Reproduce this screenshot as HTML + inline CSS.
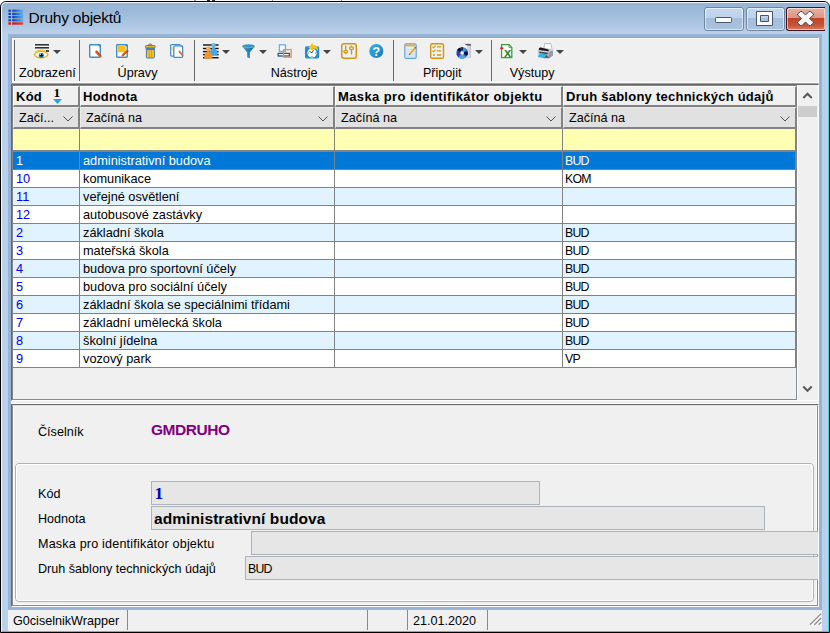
<!DOCTYPE html>
<html lang="cs">
<head>
<meta charset="utf-8">
<title>Druhy objektů</title>
<style>
html,body{margin:0;padding:0;background:#fff;}
body{width:830px;height:633px;position:relative;overflow:hidden;font-family:"Liberation Sans",sans-serif;font-size:12.6px;color:#000;}
.abs{position:absolute;}
#win{position:absolute;left:0;top:1px;width:830px;height:632px;box-sizing:border-box;border:1px solid #000;border-radius:6px 6px 0 0;background:#b9d1ea;overflow:hidden;}
#hl{position:absolute;left:0;top:0;right:0;bottom:0;border:1px solid #f4f9ff;border-right-color:#3fd8f0;border-bottom-color:#28d0ee;border-radius:5px 5px 0 0;}
#cap{position:absolute;left:1px;top:1px;width:826px;height:31px;background:linear-gradient(#98b4d5 0,#9ebadA 30%,#abc5e2 65%,#b7cfe9 92%,#b9d1ea 100%);border-radius:4px 4px 0 0;}
#title{position:absolute;left:27.5px;top:6px;font-size:15.5px;letter-spacing:-0.22px;line-height:20px;color:#000;white-space:nowrap;}
#inner{position:absolute;left:7px;top:32px;width:814px;height:576px;background:#98b3d3;}
#client{position:absolute;left:10px;top:35px;width:808px;height:570px;background:#f0f0f0;}
.cb{position:absolute;top:5px;height:24px;box-sizing:border-box;border:1px solid #5c6f88;border-radius:3px;}
.cb i{position:absolute;left:0;top:0;right:0;bottom:0;border:1px solid rgba(255,255,255,.55);border-radius:2px;}
#bmin,#bmax{background:linear-gradient(#c3d7ee 0,#bdd3ec 46%,#a3bddb 47%,#a9c3e0 100%);border-color:#6f86a3;}
#bclose{background:linear-gradient(#e8b0a0 0,#dc9482 46%,#c0432a 47%,#c8553a 80%,#d9826a 100%);border-color:#431422;}
/* toolbar */
#tb{position:absolute;left:0;top:0;width:808px;height:47px;background:#f0f0f0;border-top:1px solid #a0a0a0;border-left:1px solid #a0a0a0;border-right:1px solid #fff;border-bottom:1px solid #a0a0a0;box-sizing:border-box;}
#tb:before{content:'';position:absolute;left:0;top:0;right:0;bottom:0;border:1px solid #fff;border-right:0;}
.sep{position:absolute;top:4px;width:1px;height:40px;background:#686868;}
.sep2{position:absolute;top:2px;width:1px;height:41px;background:#686868;}
.tl{position:absolute;top:27px;line-height:16px;white-space:nowrap;}
.ar{position:absolute;width:0;height:0;border-left:4px solid transparent;border-right:4px solid transparent;border-top:4px solid #444;}
/* grid */
#grid{position:absolute;left:0;top:47px;width:808px;height:317px;background:#f0f0f0;border-top:1px solid #696969;border-left:1px solid #696969;border-bottom:1px solid #fff;border-right:1px solid #fff;box-sizing:border-box;}
#gin{position:absolute;left:0;top:0;width:785px;height:315px;box-sizing:border-box;border-top:1px solid #828282;border-left:1px solid #828282;border-right:1px solid #858a94;border-bottom:1px solid #858a94;}
#gin2{position:absolute;left:0;top:0;width:784px;height:313px;}
.hc{position:absolute;top:0;height:21px;box-sizing:border-box;background:#f0f0f0;border-top:1px solid #fff;border-left:1px solid #fff;border-right:2px solid #828282;border-bottom:2px solid #828282;font-weight:bold;font-size:13px;letter-spacing:0.25px;line-height:20px;padding-left:2px;white-space:nowrap;overflow:hidden;}
.fc{position:absolute;top:21px;height:22px;box-sizing:border-box;background:#e1e1e1;border-top:1px solid #ececec;border-left:1px solid #ececec;border-right:2px solid #828282;border-bottom:2px solid #828282;line-height:21px;padding-left:5px;white-space:nowrap;overflow:hidden;}
.row{position:absolute;left:0;width:784px;height:18px;box-sizing:border-box;border-bottom:1px solid #828282;background:#fff;line-height:19px;white-space:nowrap;}
.row.alt{background:#e1f3ff;}
.row.sel{background:#0078d7;color:#fff;}
.row.sel .c0{color:#fff;}
.row span{font-size:12.75px;line-height:18px;position:absolute;top:0;height:17px;box-sizing:border-box;border-right:1px solid #828282;padding-left:3px;overflow:hidden;}
.c0{left:0;width:67px;color:#0000f0;}
.c1{left:67px;width:255px;}
.c2{left:322px;width:228px;}
.c3{left:550px;width:234px;border-right-width:2px !important;font-size:12.3px !important;letter-spacing:-0.75px;padding-left:2px !important;}
/* form */
#spl{position:absolute;left:0;top:366px;width:808px;height:1px;background:#fff;}
#form{position:absolute;left:0;top:367px;width:808px;height:203px;overflow:hidden;background:#f0f0f0;border-top:1px solid #696969;border-left:1px solid #696969;border-bottom:1px solid #fff;border-right:1px solid #fff;box-sizing:border-box;}
#fin{position:absolute;left:0;top:0;width:806px;height:201px;box-sizing:border-box;border-left:1px solid #8c8c8c;border-top:1px solid #e3e3e3;border-right:1px solid #858a94;border-bottom:1px solid #858a94;}
#fin:before{content:'';position:absolute;left:0;top:0;right:0;bottom:0;border:1px solid #fff;border-top:0;}
.lb{position:absolute;line-height:16px;white-space:nowrap;}
.fd{position:absolute;height:24px;box-sizing:border-box;background:#e6e6e6;border:1px solid #adb1b8;line-height:22px;padding-left:2px;white-space:nowrap;}
/* status */
#status{position:absolute;left:7px;top:608px;width:814px;height:21px;background:#f0f0f0;}
.ss{position:absolute;top:0;width:1px;height:20px;background:#8a8a8a;}

.chev{position:absolute;right:5px;top:8px;}
#yrow{position:absolute;left:0;top:43px;width:784px;height:23px;box-sizing:border-box;border-bottom:2px solid #828282;background:#ffffb4;}
#yrow span{position:absolute;top:0;height:21px;box-sizing:border-box;border-right:1px solid #828282;}
#vsb{position:absolute;left:785px;top:1px;width:20px;height:314px;background:#f0f0f0;border-left:1px solid #fff;}
#gb{position:absolute;left:3px;top:58px;width:799px;height:139px;box-sizing:border-box;border:1px solid #9db5d3;border-radius:4px;}
#gb i{position:absolute;left:0;top:0;right:0;bottom:0;border:1px solid #fff;border-radius:3px;}
.srt{position:absolute;left:39.5px;top:-4px;font-size:13.5px;letter-spacing:0;font-family:'Liberation Serif',serif;}
</style>
</head>
<body>
<div class="abs" style="left:194px;top:0;width:2px;height:1px;background:#9a9a9a"></div><div class="abs" style="left:207px;top:0;width:3px;height:1px;background:#222"></div><div class="abs" style="left:212px;top:0;width:3px;height:1px;background:#333"></div><div class="abs" style="left:272px;top:0;width:1px;height:1px;background:#888"></div><div class="abs" style="left:341px;top:0;width:1px;height:1px;background:#888"></div>
<div id="win">
  <div id="cap"></div>
  <div id="hl"></div>
  <svg class="abs" style="left:7px;top:7.1px" width="16" height="16" viewBox="0 0 16 16">
    <defs>
      <linearGradient id="tb1" x1="0" y1="0" x2="1" y2="0"><stop offset="0" stop-color="#0a3cb4"/><stop offset="0.6" stop-color="#2f86ea"/><stop offset="1" stop-color="#5cb0f6"/></linearGradient>
      <linearGradient id="tb2" x1="0" y1="0" x2="1" y2="0"><stop offset="0" stop-color="#c81408"/><stop offset="1" stop-color="#e8483a"/></linearGradient>
    </defs>
    <g>
      <rect x="0.4" y="0.6" width="2.6" height="2.2" fill="#1746b8"/><rect x="4.2" y="0.6" width="11" height="2.2" fill="url(#tb1)"/>
      <rect x="0.4" y="3.8" width="2.6" height="2.2" fill="#1746b8"/><rect x="4.2" y="3.8" width="11" height="2.2" fill="url(#tb1)"/>
      <rect x="0.4" y="7" width="2.6" height="2.2" fill="#1746b8"/><rect x="4.2" y="7" width="11" height="2.2" fill="url(#tb1)"/>
      <rect x="0.4" y="10.2" width="2.6" height="2.2" fill="#1746b8"/><rect x="4.2" y="10.2" width="11" height="2.2" fill="url(#tb1)"/>
      <rect x="0.4" y="13.3" width="2.6" height="2.4" fill="#e01808"/><rect x="4.2" y="13.3" width="11" height="2.4" fill="url(#tb2)"/>
      <g fill="#7d8ca8" opacity="0.8"><rect x="4.2" y="2.8" width="11" height="0.7"/><rect x="4.2" y="6" width="11" height="0.7"/><rect x="4.2" y="9.2" width="11" height="0.7"/><rect x="4.2" y="12.4" width="11" height="0.7"/></g>
    </g>
  </svg>
  <div id="title">Druhy objektů</div>
  <div class="cb" id="bmin" style="left:703px;width:40px"><i></i><svg class="abs" style="left:9px;top:8px" width="20" height="9" viewBox="0 0 20 9"><rect x="1.5" y="1.5" width="16" height="5" rx="0.8" fill="#fcfcfd" stroke="#4b566b" stroke-width="1"/></svg></div>
  <div class="cb" id="bmax" style="left:745px;width:39px"><i></i><svg class="abs" style="left:8px;top:2px" width="20" height="18" viewBox="0 0 20 18"><path fill-rule="evenodd" d="M1.5 1.5 H17.5 V15.5 H1.5 Z M5.5 5.5 V11.5 H13.5 V5.5 Z" fill="#fafafb" stroke="#4b566b" stroke-width="1" stroke-linejoin="round"/></svg></div>
  <div class="cb" id="bclose" style="left:785px;width:39px;border-right:0;border-radius:3px 0 0 3px"><i></i><svg class="abs" style="left:9px;top:2px" width="20" height="18" viewBox="0 0 20 18"><path d="M1.5 4 L4.5 1.5 H6 L9.5 5 L13 1.5 H14.5 L17.5 4 V5 L13.5 8.5 L17.5 12 V13 L14.5 15.5 H13 L9.5 12 L6 15.5 H4.5 L1.5 13 V12 L5.5 8.5 L1.5 5 Z" fill="#f6f6f6" stroke="#3d4660" stroke-width="1" stroke-linejoin="round"/></svg></div>
  <div id="inner"></div>
  <div id="client">
    <div id="tb">
      <div class="sep" style="left:2px;top:2px;height:41px"></div>
      <div class="sep2" style="left:67px"></div>
      <div class="sep2" style="left:182px"></div>
      <div class="sep2" style="left:381px"></div>
      <div class="sep2" style="left:479px"></div>
      <div class="tl" style="left:-64.7px;width:200px;text-align:center">Zobrazení</div>
      <div class="tl" style="left:25.5px;width:200px;text-align:center">Úpravy</div>
      <div class="tl" style="left:182.2px;width:200px;text-align:center">Nástroje</div>
      <div class="tl" style="left:330.2px;width:200px;text-align:center">Připojit</div>
      <div class="tl" style="left:420.1px;width:200px;text-align:center">Výstupy</div>
      <div class="ar" style="left:41px;top:12px"></div>
      <div class="ar" style="left:210px;top:12px"></div>
      <div class="ar" style="left:247px;top:12px"></div>
      <div class="ar" style="left:311px;top:12px"></div>
      <div class="ar" style="left:463px;top:12px"></div>
      <div class="ar" style="left:507px;top:12px"></div>
      <div class="ar" style="left:544px;top:12px"></div>
      <svg class="abs" style="left:-1px;top:-1px" width="808" height="47" viewBox="11 37 808 47">
        <defs>
          <linearGradient id="gHelp" x1="0" y1="0" x2="1" y2="1"><stop offset="0" stop-color="#35b4e8"/><stop offset="1" stop-color="#1478bd"/></linearGradient>
          <linearGradient id="gFun" x1="0" y1="0" x2="1" y2="0"><stop offset="0" stop-color="#3aa0dc"/><stop offset="1" stop-color="#155f9e"/></linearGradient>
          <radialGradient id="gDisc" cx="0.5" cy="0.5" r="0.5"><stop offset="0" stop-color="#8ec8f0"/><stop offset="0.55" stop-color="#1a58c0"/><stop offset="1" stop-color="#0a1440"/></radialGradient>
        </defs>
        <!-- eye / view -->
        <g>
          <rect x="35" y="44.1" width="14" height="1.4" fill="#1c1c1c"/>
          <rect x="35" y="47.1" width="14" height="1.4" fill="#1c1c1c"/>
          <rect x="46" y="50.2" width="3" height="1.6" fill="#222"/>
          <path d="M34.3 54.6 C36.5 50.6 45.5 50.2 48 54.6 C45.5 58.8 36.8 59 34.3 54.6 Z" fill="#fff" stroke="#e2b21c" stroke-width="1.2"/>
          <path d="M35 52.2 C38 49.6 43.5 49.6 46 51.4" fill="none" stroke="#e8bc28" stroke-width="1"/>
          <circle cx="41.3" cy="55.3" r="2.6" fill="#2384b4"/>
          <circle cx="41.3" cy="55.3" r="1.4" fill="#0a0a14"/>
          <circle cx="40.5" cy="54.2" r="0.6" fill="#fff"/>
        </g>
        <!-- new -->
        <g>
          <rect x="89.7" y="44.7" width="10.6" height="12.6" rx="0.7" fill="#fff" stroke="#3d8fcf" stroke-width="1.4"/>
          <path d="M97.6 44.7 L100.3 47.4 L100.3 44.7 Z" fill="#3d8fcf"/>
          <path d="M95 51.2 L96.8 50.4 L101.6 56 L100 57.8 L95.2 52.6 Z" fill="#e2601c"/><path d="M96.8 50.4 L101.6 56 L101 56.7 L96.2 51 Z" fill="#b8420c"/>
          <path d="M94.6 50.2 L96.4 50.8 L95.4 52 Z" fill="#e8c890"/>
        </g>
        <!-- edit -->
        <g>
          <rect x="116.7" y="44.7" width="10.6" height="12.6" rx="0.7" fill="#fff" stroke="#3d8fcf" stroke-width="1.4"/>
          <path d="M124.6 44.7 L127.3 47.4 L127.3 44.7 Z" fill="#3d8fcf"/>
          <rect x="118" y="45.8" width="7.6" height="6.4" fill="#f8c01c"/>
          <path d="M127 49.4 L128.6 51 L122.8 56.6 L121.4 55.2 Z" fill="#e2601c"/><path d="M127.8 50.2 L128.6 51 L122.8 56.6 L122.2 56 Z" fill="#b8420c"/>
          <path d="M121.6 55.2 L122.6 56.2 L120.8 56.8 Z" fill="#e8c890"/>
        </g>
        <!-- trash -->
        <g>
          <rect x="148.6" y="44" width="3" height="2" rx="0.8" fill="#f5c228" stroke="#3a6ea8" stroke-width="0.8"/>
          <rect x="145.4" y="45.6" width="9.8" height="2.2" rx="0.8" fill="#f5c228" stroke="#3a6ea8" stroke-width="0.9"/>
          <rect x="145.6" y="48" width="9.4" height="1.6" fill="#4a7fc0"/>
          <path d="M146.4 49.6 H154.4 V57 Q154.4 58 153.4 58 H147.4 Q146.4 58 146.4 57 Z" fill="#f5c228" stroke="#3a6ea8" stroke-width="0.9"/>
          <rect x="148.7" y="50.4" width="0.9" height="6.6" fill="#d09a10"/>
          <rect x="151.2" y="50.4" width="0.9" height="6.6" fill="#d09a10"/>
        </g>
        <!-- copy -->
        <g>
          <rect x="170.7" y="44.6" width="9.6" height="11.6" rx="1" fill="#fff" stroke="#3d8fcf" stroke-width="1.3"/>
          <rect x="171.6" y="47" width="1" height="4.2" fill="#f3c94a"/>
          <rect x="173.8" y="45.8" width="8.8" height="11.6" rx="1" fill="#fff" stroke="#3d8fcf" stroke-width="1.3"/>
          <path d="M180.4 45.8 L182.6 48 L182.6 45.8 Z" fill="#3d8fcf"/>
          <path d="M178.6 51 L179.8 50.6 L183.6 55.4 L182.6 56.6 L178.9 52.2 Z" fill="#e2601c"/>
          <path d="M178 50.2 L179.6 50.8 L178.8 51.9 Z" fill="#e8c890"/>
        </g>
        <!-- sort / pawns -->
        <g>
          <g fill="#111">
            <rect x="203" y="44.3" width="15.6" height="1.4"/>
            <rect x="203" y="47.8" width="15.6" height="1.4"/>
            <rect x="203" y="50.9" width="15.6" height="1.4"/>
            <rect x="203" y="53.9" width="15.6" height="1.4"/>
            <rect x="203" y="57" width="15.6" height="1.4"/>
          </g>
          <path d="M213.6 46 C214.6 48.4 217.9 50.4 217.7 53.7 C217.6 55.3 216.7 55.5 215.7 55.5 H211.5 C210.5 55.5 209.6 55.3 209.5 53.7 C209.3 50.4 212.6 48.4 213.6 46 Z" fill="#49a6dc"/>
          <circle cx="213.6" cy="45.1" r="2.2" fill="#58b4e6"/>
          <circle cx="213.1" cy="44.6" r="0.7" fill="#c8e8fa"/>
          <path d="M208.3 49.6 C209.3 52 212.6 54 212.4 56.9 C212.3 58.5 211.4 58.7 210.4 58.7 H206.2 C205.2 58.7 204.3 58.5 204.2 56.9 C204 54 207.3 52 208.3 49.6 Z" fill="#f8922a"/>
          <circle cx="208.3" cy="48.7" r="2.2" fill="#fa9c38"/>
          <circle cx="207.8" cy="48.2" r="0.7" fill="#fde0c0"/>
        </g>
        <!-- funnel -->
        <g>
          <path d="M242.2 46.2 L247.2 52.6 L247.2 57.2 L249.8 58.2 L249.8 52.6 L254.8 46.2 Z" fill="url(#gFun)"/>
          <ellipse cx="248.5" cy="46.2" rx="6.3" ry="2" fill="#2f95d6"/>
          <path d="M242.4 46.8 Q248.5 48.8 254.6 46.8" fill="none" stroke="#d8a81c" stroke-width="0.8"/>
        </g>
        <!-- windows -->
        <g>
          <rect x="279.4" y="44.8" width="6.1" height="6.6" fill="#f8f8f8" stroke="#68aef4" stroke-width="1.3"/>
          <rect x="278.2" y="53.4" width="11.2" height="2.6" fill="#fff" stroke="#2a4fa8" stroke-width="1.3"/>
          <rect x="283.6" y="49.6" width="7.6" height="7.6" fill="none" stroke="#e8963c" stroke-width="1.3"/>
        </g>
        <!-- history clock -->
        <g>
          <rect x="305" y="46.2" width="14.2" height="12.2" rx="1.6" fill="#1e8fd0"/>
          <circle cx="312" cy="53" r="4.6" fill="#fff"/><g fill="#456"><rect x="311.6" y="49" width="0.8" height="1"/><rect x="311.6" y="56" width="0.8" height="1"/><rect x="308" y="52.6" width="1" height="0.8"/><rect x="315" y="52.6" width="1" height="0.8"/></g>
          <path d="M312 52.8 L309.4 51.2 M312 52.8 L313.4 50.4" stroke="#1a3a6a" stroke-width="0.9" fill="none"/>
          <path d="M308.4 47.4 L312.8 42.4 L312.8 44.8 C316.6 44.8 318.6 47.8 318 51.2 C317 48.8 315.2 48.4 312.8 48.6 L312.8 51.2 Z" fill="#ffc312"/>
        </g>
        <!-- sliders -->
        <g fill="none" stroke="#d4960e">
          <rect x="341.7" y="43.7" width="14.6" height="14.6" rx="2.2" stroke-width="1.5"/>
          <path d="M345.7 45.6 V51 M345.7 52.4 V54.2 M351.5 45.6 V47 M351.5 49.6 V54.4" stroke-width="1.3"/>
          <ellipse cx="345.7" cy="51.6" rx="2" ry="1.3" stroke-width="1.2"/>
          <ellipse cx="351.5" cy="48.2" rx="2" ry="1.4" stroke-width="1.2"/>
        </g>
        <!-- help -->
        <g>
          <circle cx="376.3" cy="51" r="7.1" fill="url(#gHelp)"/>
          <text x="376.3" y="55.6" text-anchor="middle" font-family="Liberation Sans, sans-serif" font-weight="bold" font-size="12.5" fill="#fff">?</text>
        </g>
        <!-- notepad -->
        <g>
          <rect x="404.8" y="43.8" width="11.4" height="14.6" rx="1.4" fill="#e4effb" stroke="#6a9fd6" stroke-width="1.2"/>
          <rect x="405.6" y="44.4" width="9.8" height="2" fill="#e0b040"/>
          <g stroke="#b8d2ee" stroke-width="0.7"><path d="M406 49.5 H415 M406 51.7 H415 M406 53.9 H415 M406 56.1 H415"/></g>
          <path d="M414.2 47.6 L415.6 48.8 L410.6 54.4 L409.2 53.4 Z" fill="#f0a818"/>
          <path d="M414.2 47.6 L415 46.8 L416.4 48 L415.6 48.8 Z" fill="#c83030"/>
          <path d="M409.2 53.4 L410.6 54.4 L408.8 55 Z" fill="#5a4a30"/>
        </g>
        <!-- checklist -->
        <g fill="none" stroke="#d4960e">
          <rect x="430.7" y="43.7" width="12.8" height="14.6" rx="1.6" stroke-width="1.4"/>
          <path d="M432.4 46.6 L433.6 47.8 L435.6 45.6 M432.4 50.6 L433.6 51.8 L435.6 49.6" stroke-width="1.1"/>
          <path d="M437 46.9 H441.2 M437 50.9 H441.2 M437 55 H441.2" stroke-width="1.4"/>
          <circle cx="434" cy="55" r="1" fill="#d4960e" stroke="none"/>
        </g>
        <!-- disc cabinet -->
        <g>
          <path d="M461.2 45 L463.6 43.4 H470.6 V57.6 H461.2 Z" fill="#f4f4f5" stroke="#c4c4c8" stroke-width="0.5"/>
          <rect x="467.4" y="45.4" width="3.4" height="12.4" fill="#c2c4c8"/>
          <rect x="468.2" y="45.4" width="1.2" height="12.4" fill="#e2e3e6"/>
          <path d="M464.6 44.2 Q466 45.6 470.8 45.4 V44.2 Z" fill="#1e1e22"/>
          <circle cx="462.1" cy="52.9" r="5.7" fill="#1650b6"/>
          <path d="M462.1 52.9 L457.2 50 A5.7 5.7 0 0 1 460.2 47.5 Z" fill="#050a28"/>
          <path d="M462.1 52.9 L461.4 47.2 A5.7 5.7 0 0 1 463 47.3 Z" fill="#180a40"/>
          <path d="M462.1 52.9 L463.4 47.3 A5.7 5.7 0 0 1 467 50 Z" fill="#4a8fe2"/>
          <path d="M462.1 52.9 L467.6 51.4 A5.7 5.7 0 0 1 467.2 55.4 Z" fill="#0a0a38"/>
          <path d="M462.1 52.9 L466 57 A5.7 5.7 0 0 1 458.4 57.2 Z" fill="#46a6e8"/>
          <path d="M462.1 52.9 L457.6 56.4 A5.7 5.7 0 0 1 456.5 54 Z" fill="#6a2aa0" opacity="0.7"/>
          <circle cx="462.1" cy="52.9" r="1.9" fill="#d8c070"/>
          <circle cx="462.1" cy="52.9" r="1.4" fill="#fffdf0"/>
        </g>
        <!-- excel -->
        <g>
          <path d="M501.6 44.6 H509 L511.8 47.4 V57.6 H501.6 Z" fill="#fff" stroke="#3e9c3e" stroke-width="1.3"/>
          <path d="M509 44.6 V47.4 H511.8" fill="none" stroke="#3e9c3e" stroke-width="0.9"/>
          <rect x="500.2" y="47.4" width="3.2" height="1.7" fill="#d02424"/>
          <text x="507.6" y="57.3" text-anchor="middle" font-family="Liberation Sans, sans-serif" font-weight="bold" font-size="13" fill="#2a8a2a">x</text>
        </g>
        <!-- printer -->
        <g>
          <path d="M544.6 43.5 H550.8 L552.2 49.6 H543.8 Z" fill="#fcfcfc" stroke="#a4a8b0" stroke-width="0.7"/>
          <path d="M537.6 50.6 L540.2 47.6 L552 49 L553 50.8 V55.6 L549.6 58 L538.2 57.2 Z" fill="#c9cdd3"/>
          <path d="M548.4 51.8 L553 50.8 V55.6 L549.6 58 L548.4 57.6 Z" fill="#989ca6"/>
          <path d="M538.8 48.7 Q539.4 47.4 541 47.6 L548.6 49.5 Q549.3 50.5 548.2 51.3 L539.4 50.1 Q538.4 49.7 538.8 48.7 Z" fill="#1c1c1f"/>
          <path d="M539.4 51.6 L547.8 52.8 L547.6 54.4 L539.2 53 Z" fill="#42444e"/>
          <path d="M540.4 53.1 L546.3 54.2 L543.7 58.2 L537.8 56.8 Z" fill="#28b6e6"/>
          <path d="M543.7 58.2 L546.3 54.6 L549.4 57.6 L549.2 58.2 Z" fill="#4a4c5a" opacity="0.8"/>
        </g>
      </svg>
    </div>
    <div id="grid"><div id="gin"><div id="gin2">
      <div class="hc" style="left:0px;width:67px">Kód<span class="srt">1</span><svg class="abs" style="left:39px;top:12px" width="9" height="6" viewBox="0 0 9 6"><path d="M0 0 H9 L4.5 5 Z" fill="#2b9fe2"/></svg></div>
      <div class="hc" style="left:67px;width:255px">Hodnota</div>
      <div class="hc" style="left:322px;width:228px;letter-spacing:0.4px">Maska pro identifikátor objektu</div>
      <div class="hc" style="left:550px;width:234px">Druh šablony technických údajů</div>
      <div class="fc" style="left:0px;width:67px">Začí...<svg class="chev" width="10" height="6" viewBox="0 0 10 6"><path d="M0.5 0.5 L5 5 L9.5 0.5" fill="none" stroke="#505050" stroke-width="1"/></svg></div>
      <div class="fc" style="left:67px;width:255px">Začíná na<svg class="chev" width="10" height="6" viewBox="0 0 10 6"><path d="M0.5 0.5 L5 5 L9.5 0.5" fill="none" stroke="#505050" stroke-width="1"/></svg></div>
      <div class="fc" style="left:322px;width:228px">Začíná na<svg class="chev" width="10" height="6" viewBox="0 0 10 6"><path d="M0.5 0.5 L5 5 L9.5 0.5" fill="none" stroke="#505050" stroke-width="1"/></svg></div>
      <div class="fc" style="left:550px;width:234px">Začíná na<svg class="chev" width="10" height="6" viewBox="0 0 10 6"><path d="M0.5 0.5 L5 5 L9.5 0.5" fill="none" stroke="#505050" stroke-width="1"/></svg></div>
      <div id="yrow"><span class="c0"></span><span class="c1"></span><span class="c2"></span><span class="c3"></span></div>
      <div class="row sel" style="top:66px"><span class="c0">1</span><span class="c1">administrativní budova</span><span class="c2"></span><span class="c3">BUD</span></div>
      <div class="row" style="top:84px"><span class="c0">10</span><span class="c1">komunikace</span><span class="c2"></span><span class="c3">KOM</span></div>
      <div class="row alt" style="top:102px"><span class="c0">11</span><span class="c1">veřejné osvětlení</span><span class="c2"></span><span class="c3"></span></div>
      <div class="row" style="top:120px"><span class="c0">12</span><span class="c1">autobusové zastávky</span><span class="c2"></span><span class="c3"></span></div>
      <div class="row alt" style="top:138px"><span class="c0">2</span><span class="c1">základní škola</span><span class="c2"></span><span class="c3">BUD</span></div>
      <div class="row" style="top:156px"><span class="c0">3</span><span class="c1">mateřská škola</span><span class="c2"></span><span class="c3">BUD</span></div>
      <div class="row alt" style="top:174px"><span class="c0">4</span><span class="c1">budova pro sportovní účely</span><span class="c2"></span><span class="c3">BUD</span></div>
      <div class="row" style="top:192px"><span class="c0">5</span><span class="c1">budova pro sociální účely</span><span class="c2"></span><span class="c3">BUD</span></div>
      <div class="row alt" style="top:210px"><span class="c0">6</span><span class="c1">základní škola se speciálnimi třídami</span><span class="c2"></span><span class="c3">BUD</span></div>
      <div class="row" style="top:228px"><span class="c0">7</span><span class="c1">základní umělecká škola</span><span class="c2"></span><span class="c3">BUD</span></div>
      <div class="row alt" style="top:246px"><span class="c0">8</span><span class="c1">školní jídelna</span><span class="c2"></span><span class="c3">BUD</span></div>
      <div class="row" style="top:264px"><span class="c0">9</span><span class="c1">vozový park</span><span class="c2"></span><span class="c3">VP</span></div>
      </div></div>
      <div id="vsb">
        <svg class="abs" style="left:3px;top:5px" width="13" height="10" viewBox="0 0 13 10"><path d="M2.3 6.9 L6.5 2.7 L10.7 6.9" fill="none" stroke="#5a5a5a" stroke-width="2.1"/></svg>
        <div class="abs" style="left:0;top:20px;width:19px;height:11px;background:#cdcdcd"></div>
        <svg class="abs" style="left:3px;top:298px" width="13" height="10" viewBox="0 0 13 10"><path d="M2.3 2.6 L6.5 6.8 L10.7 2.6" fill="none" stroke="#5a5a5a" stroke-width="2.1"/></svg>
      </div>
    </div>
    <div id="spl"></div>
    <div id="form"><div id="fin"></div>
      <div class="lb" style="left:26px;top:19px">Číselník</div>
      <div class="lb" style="left:139px;top:15px;font-weight:bold;font-size:15.5px;letter-spacing:-0.45px;line-height:20px;color:#800080">GMDRUHO</div>
      <div id="gb"><i></i></div>
      <div class="lb" style="left:26px;top:81px">Kód</div>
      <div class="lb" style="left:26px;top:106px">Hodnota</div>
      <div class="lb" style="left:26px;top:131px;letter-spacing:0.18px">Maska pro identifikátor objektu</div>
      <div class="lb" style="left:26px;top:156px">Druh šablony technických údajů</div>
      <div class="fd" style="left:139px;top:76px;width:389px;font-weight:bold;font-size:17.5px;color:#0000c8;font-family:'Liberation Serif',serif;padding-left:2.5px;line-height:23px">1</div>
      <div class="fd" style="left:139px;top:101px;width:614px;font-weight:bold;font-size:15.5px;letter-spacing:0.08px;line-height:24px">administrativní budova</div>
      <div class="fd" style="left:239px;top:126px;width:570px"></div>
      <div class="fd" style="left:233px;top:151px;width:576px;line-height:24px;font-size:12.3px;letter-spacing:-0.75px;padding-left:2px">BUD</div>
    </div>
  </div>
  <div id="status">
    <div class="lb" style="left:5px;top:3px">G0ciselnikWrapper</div>
    <div class="ss" style="left:119px"></div>
    <div class="ss" style="left:359px"></div>
    <div class="ss" style="left:399px"></div>
    <div class="ss" style="left:479px"></div>
    <div class="lb" style="left:405px;top:3px">21.01.2020</div>
    <svg class="abs" style="left:800px;top:3px" width="14" height="14" viewBox="808 613 14 14"><g fill="none" stroke-linecap="butt"><path d="M811 625.6 L821.6 615 M815.4 625.6 L821.6 619.4 M819.6 625.6 L821.6 623.6" stroke="#fff" stroke-width="1.3"/><path d="M810 624.8 L821.2 613.6 M814.4 624.8 L821.2 618 M818.6 624.8 L821.2 622.2" stroke="#8e8e8e" stroke-width="1.3"/></g></svg>
  </div>
</div>
</body>
</html>
